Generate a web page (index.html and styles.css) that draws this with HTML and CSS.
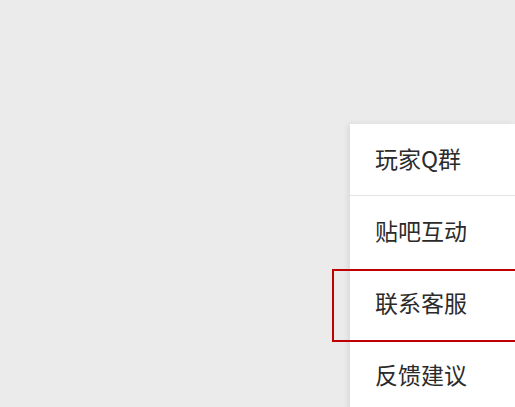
FILE: index.html
```html
<!DOCTYPE html>
<html lang="zh-CN">
<head>
    <meta charset="UTF-8">
    <meta name="viewport" content="width=device-width, initial-scale=1.0">
    <title>菜单</title>
    <link rel="stylesheet" href="styles.css">
</head>
<body>
    <div class="menu">
        <div class="menu-item divider">玩家Q群</div>
        <div class="menu-item">贴吧互动</div>
        <div class="menu-item highlight">联系客服</div>
        <div class="menu-item">反馈建议</div>
    </div>
</body>
</html>
```

FILE: styles.css
```css
body {
    margin: 0;
    padding: 0;
    background-color: #ebebeb;
    font-family: "Noto Sans CJK SC", "Noto Sans", sans-serif;
    overflow: hidden;
    height: 407px;
}
.menu {
    margin: 124px 0 0 350px;
    background: #fff;
    box-shadow: -2px 0 6px rgba(0, 0, 0, 0.08);
}
.menu-item {
    position: relative;
    height: 72px;
    line-height: 68px;
    padding-left: 25px;
    font-size: 23px;
    color: #2b2b2b;
}
.divider {
    border-bottom: 1px solid #e3e3e3;
    height: 71px;
}
.highlight::after {
    content: "";
    position: absolute;
    left: -18px;
    right: -5px;
    top: 1px;
    bottom: -2px;
    border: 2px solid #c00000;
}
```
